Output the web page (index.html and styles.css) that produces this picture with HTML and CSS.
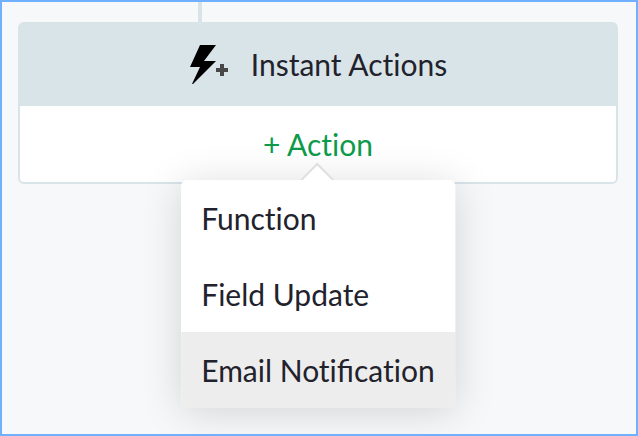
FILE: index.html
```
<!DOCTYPE html>
<html lang="en">
<head>
  <meta charset="UTF-8">
  <title>Instant Actions</title>
  <link rel="stylesheet" href="styles.css">
</head>
<body>
  <div class="connector"></div>
  <section class="card">
    <header class="card-header">
      <svg class="bolt-icon" viewBox="0 0 40 40" aria-hidden="true">
        <path d="M11 1H27L15 17H27L4 40H3L11 23H1Z" fill="#000"/>
        <path d="M31 20h4v4h4v4h-4v4h-4v-4h-4v-4h4z" fill="#484848"/>
      </svg>
      <h2>Instant Actions</h2>
    </header>
    <div class="card-body">
      <button class="add-btn" type="button">+ Action</button>
      <div class="menu">
        <button class="menu-item" type="button">Function</button>
        <button class="menu-item" type="button">Field Update</button>
        <button class="menu-item active" type="button">Email Noti<span class="liga">fi</span>cation</button>
      </div>
    </div>
  </section>
</body>
</html>
```
FILE: styles.css
```
:root {
  --page-bg: #f7f8fa;
  --line: #d9e4e8;
  --text: #22222c;
  --green: #0d9b4b;
}
* {
  box-sizing: border-box;
}
body {
  margin: 0;
  min-height: 100vh;
  padding: 0 18px 0 16px;
  border: 2px solid #71afff;
  background-color: var(--page-bg);
  color: var(--text);
  font-family: Lato, sans-serif;
  font-size: 30px;
  line-height: 36px;
  font-variant-ligatures: none;
}
.connector {
  width: 4px;
  height: 20px;
  margin-left: 30%;
  background-color: var(--line);
}
.card {
  border: 2px solid var(--line);
  border-radius: 6px;
  background-color: #fff;
}
.card-header {
  display: flex;
  align-items: center;
  justify-content: center;
  gap: 22px;
  padding: 20px 0 22px;
  background-color: var(--line);
}
.card-header h2 {
  margin: 0;
  font-size: 30px;
  font-weight: 400;
}
.bolt-icon {
  width: 40px;
  height: 40px;
}
.card-body {
  position: relative;
  display: flex;
  justify-content: center;
}
.add-btn {
  padding: 20px;
  border: none;
  background: none;
  color: var(--green);
  font: inherit;
  font-variant-ligatures: none;
  cursor: pointer;
}
/* drop-down under the add button */
.menu {
  position: absolute;
  top: 74px;
  left: 50%;
  transform: translateX(-50%);
  display: flex;
  flex-direction: column;
  border-radius: 6px;
  background-color: #fff;
  box-shadow: 0 4px 40px rgba(0, 0, 0, 0.15);
}
.menu::before {
  content: "";
  position: absolute;
  top: -12px;
  left: 50%;
  width: 24px;
  height: 24px;
  margin-left: -14px;
  border: 2px solid #dfdfdf;
  border-right: none;
  border-bottom: none;
  background-color: #fff;
  transform: rotate(45deg);
}
.menu-item {
  position: relative;
  padding: 20px;
  border: none;
  background: #fff;
  color: inherit;
  font: inherit;
  font-variant-ligatures: none;
  text-align: left;
  white-space: nowrap;
  cursor: pointer;
}
.menu-item:first-child {
  border-radius: 6px 6px 0 0;
}
.menu-item:last-child {
  border-radius: 0 0 6px 6px;
}
.menu-item.active {
  background-color: #ededed;
}
.liga {
  font-variant-ligatures: common-ligatures;
}
```
